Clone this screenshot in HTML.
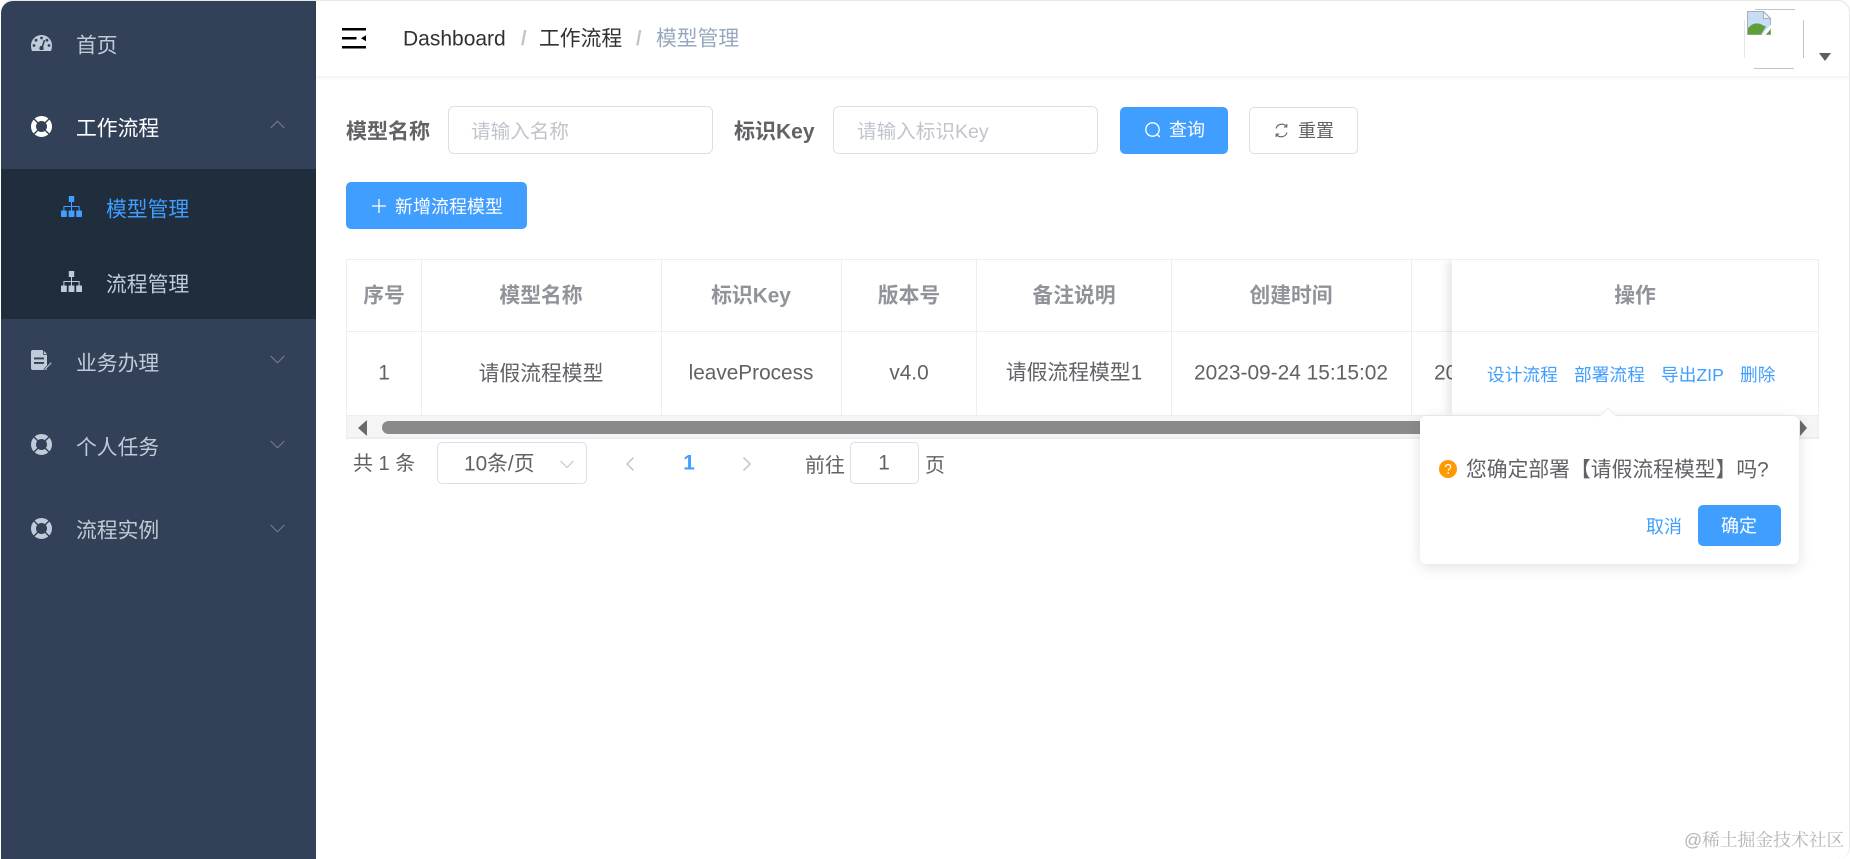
<!DOCTYPE html>
<html lang="zh-CN">
<head>
<meta charset="utf-8">
<title>模型管理</title>
<style>
html,body{margin:0;padding:0;width:1850px;height:859px;overflow:hidden;background:#fff}
body{position:relative;font-family:"Liberation Sans","Noto Sans CJK SC",sans-serif;font-size:20.8px;color:#606266}
div,span,svg{position:absolute;box-sizing:border-box}
.t{white-space:nowrap;line-height:1;transform:translateY(-50%)}
.c{white-space:nowrap;line-height:1;transform:translate(-50%,-50%);text-align:center}
.menu{color:#bfcbd9}
.sep{position:absolute;background:#ebeef5}
.th{font-weight:700;color:#909399}
.link{color:#409eff;font-size:17.7px}
</style>
</head>
<body>

<!-- window frame -->
<div style="left:0;top:0;width:1850px;height:859px;border-top:1px solid #e8e8e8;border-right:1px solid #e8e8e8;border-radius:12px 12px 12px 0;z-index:30;pointer-events:none"></div>

<!-- sidebar -->
<div style="left:1px;top:1px;width:315px;height:858px;background:#324157;border-top-left-radius:12px;overflow:hidden">
  <div style="left:0;top:168px;width:315px;height:150px;background:#1f2d3d"></div>
</div>

<!-- sidebar icons -->
<svg style="left:31px;top:35px" width="21" height="16" viewBox="0 0 21 16">
  <path d="M10.5 0C4.7 0 0 4.7 0 10.500c0 1.900.3 3.600 1 5.500h19c.7-1.900 1-3.600 1-5.500C21 4.700 16.300 0 10.500 0z" fill="#bfcbd9"/>
  <g fill="#324157"><circle cx="10.500" cy="3" r="1.400"/><circle cx="5" cy="5.200" r="1.400"/><circle cx="16" cy="5.200" r="1.400"/><circle cx="3" cy="10.500" r="1.400"/><circle cx="18" cy="10.500" r="1.400"/><path d="M12.800 4.800l1.400.6-2 6.200c.7 1 .6 2.500-.2 3.400H9c-.9-1-.9-2.600.2-3.600.5-.4 1.100-.6 1.600-.5z"/></g>
</svg>
<svg style="left:31px;top:116px" width="21" height="21" viewBox="0 0 21 21">
  <circle cx="10.500" cy="10.500" r="8" fill="none" stroke="#fff" stroke-width="5"/>
  <g stroke="#324157" stroke-width="1.400"><path d="M2.500 2.500l4.400 4.400M18.500 2.500l-4.400 4.400M2.500 18.500l4.400-4.400M18.500 18.500l-4.400-4.400"/></g>
</svg>
<svg style="left:61px;top:196px" width="21" height="21" viewBox="0 0 21 21" fill="#409eff">
  <rect x="7.800" y="0" width="5.400" height="6"/><rect x="0" y="14.500" width="5.800" height="6.500" rx=".6"/><rect x="7.600" y="14.500" width="5.800" height="6.500" rx=".6"/><rect x="15.200" y="14.500" width="5.800" height="6.500" rx=".6"/>
  <path d="M10 6h1v4h7.600v4.500h-1V11H11v3.500h-1V11H3.400v3.500h-1V10H10z"/>
</svg>
<svg style="left:61px;top:271px" width="21" height="21" viewBox="0 0 21 21" fill="#bfcbd9">
  <rect x="7.800" y="0" width="5.400" height="6"/><rect x="0" y="14.500" width="5.800" height="6.500" rx=".6"/><rect x="7.600" y="14.500" width="5.800" height="6.500" rx=".6"/><rect x="15.200" y="14.500" width="5.800" height="6.500" rx=".6"/>
  <path d="M10 6h1v4h7.600v4.500h-1V11H11v3.500h-1V11H3.400v3.500h-1V10H10z"/>
</svg>
<svg style="left:31px;top:350px" width="21" height="20" viewBox="0 0 21 20">
  <path d="M2 0h9.500L16 4.500V20H2a2 2 0 0 1-2-2V2a2 2 0 0 1 2-2z" fill="#bfcbd9"/>
  <path d="M12.500 0L17 4.500h-4.500z" fill="#bfcbd9" stroke="#324157" stroke-width=".8"/>
  <rect x="3" y="7.500" width="10" height="1.900" fill="#324157"/><rect x="3" y="12" width="10" height="1.900" fill="#324157"/>
  <path d="M13 19l6.800-7 1.200 1.200-6.800 7H13z" fill="#bfcbd9" stroke="#324157" stroke-width=".6"/>
</svg>
<svg style="left:31px;top:434px" width="21" height="21" viewBox="0 0 21 21">
  <circle cx="10.500" cy="10.500" r="8" fill="none" stroke="#bfcbd9" stroke-width="5"/>
  <g stroke="#324157" stroke-width="1.400"><path d="M2.500 2.500l4.400 4.400M18.500 2.500l-4.400 4.400M2.500 18.500l4.400-4.400M18.500 18.500l-4.400-4.400"/></g>
</svg>
<svg style="left:31px;top:518px" width="21" height="21" viewBox="0 0 21 21">
  <circle cx="10.500" cy="10.500" r="8" fill="none" stroke="#bfcbd9" stroke-width="5"/>
  <g stroke="#324157" stroke-width="1.400"><path d="M2.500 2.500l4.400 4.400M18.500 2.500l-4.400 4.400M2.500 18.500l4.400-4.400M18.500 18.500l-4.400-4.400"/></g>
</svg>

<!-- sidebar text -->
<span class="t menu" style="left:76px;top:47px">首页</span>
<span class="t" style="left:76px;top:130px;color:#fff">工作流程</span>
<span class="t" style="left:106px;top:211px;color:#409eff">模型管理</span>
<span class="t menu" style="left:106px;top:286px">流程管理</span>
<span class="t menu" style="left:76px;top:365px">业务办理</span>
<span class="t menu" style="left:76px;top:449px">个人任务</span>
<span class="t menu" style="left:76px;top:532px">流程实例</span>

<!-- chevrons -->
<svg style="left:270px;top:120px" width="15" height="9" viewBox="0 0 15 9"><path d="M.7 8L7.500 1.200 14.300 8" fill="none" stroke="#76828f" stroke-width="1"/></svg>
<svg style="left:270px;top:355px" width="15" height="9" viewBox="0 0 15 9"><path d="M.7 1l6.800 6.800L14.300 1" fill="none" stroke="#76828f" stroke-width="1"/></svg>
<svg style="left:270px;top:440px" width="15" height="9" viewBox="0 0 15 9"><path d="M.7 1l6.800 6.800L14.300 1" fill="none" stroke="#76828f" stroke-width="1"/></svg>
<svg style="left:270px;top:524px" width="15" height="9" viewBox="0 0 15 9"><path d="M.7 1l6.800 6.800L14.300 1" fill="none" stroke="#76828f" stroke-width="1"/></svg>

<!-- header -->
<div style="left:316px;top:1px;width:1533px;height:75px;background:#fff;box-shadow:0 1px 4px rgba(0,21,41,.08);border-top-right-radius:12px"></div>
<svg style="left:342px;top:28px" width="24" height="21" viewBox="0 0 24 21" fill="#000">
  <rect x="0" y="0" width="24" height="2.500"/><rect x="0" y="9" width="14.500" height="2.500"/><rect x="0" y="18" width="24" height="2.500"/><path d="M24 7.200v6l-5-3z"/>
</svg>
<span class="t" style="left:403px;top:39px;color:#303133;font-size:21px">Dashboard</span>
<span class="t" style="left:521px;top:39px;color:#c0c4cc;font-weight:700;font-size:20px">/</span>
<span class="t" style="left:539px;top:40px;color:#303133">工作流程</span>
<span class="t" style="left:636px;top:39px;color:#c0c4cc;font-weight:700;font-size:20px">/</span>
<span class="t" style="left:656px;top:40px;color:#97a8be">模型管理</span>

<!-- avatar -->
<div style="left:1744px;top:20px;width:1px;height:38px;background:#e6e6e6"></div>
<div style="left:1755px;top:9px;width:40px;height:1px;background:#c4c4c4"></div>
<div style="left:1803px;top:20px;width:1px;height:38px;background:#c4c4c4"></div>
<div style="left:1754px;top:68px;width:40px;height:1px;background:#c4c4c4"></div>
<svg style="left:1747px;top:11px" width="24" height="24" viewBox="0 0 24 24">
  <path d="M.5.5h16l7 7v16H.5z" fill="#c6ddf5" stroke="#a9adb5" stroke-width="1"/>
  <path d="M16.500.5l7 7h-7z" fill="#f2f3f5" stroke="#a9adb5" stroke-width="1"/>
  <path d="M1 23.500v-6c3-5 10-7 15-3l3 1-5 8z" fill="#5f9e38"/>
  <path d="M19 23.500l4.500-5v5z" fill="#5f9e38"/>
  <path d="M14.500 24L24 13.500v4L18.500 24z" fill="#fff"/>
</svg>
<svg style="left:1819px;top:53px" width="12" height="8" viewBox="0 0 12 8"><path d="M0 0h12L6 8z" fill="#5a5e66"/></svg>

<!-- search form -->
<span class="t" style="left:346px;top:132px;font-weight:700;font-size:21px">模型名称</span>
<div style="left:448px;top:106px;width:265px;height:48px;border:1px solid #dcdfe6;border-radius:6px;background:#fff"></div>
<span class="t" style="left:471px;top:133px;color:#c0c4cc;font-size:19.600px">请输入名称</span>
<span class="t" style="left:734px;top:132px;font-weight:700;font-size:21px">标识Key</span>
<div style="left:833px;top:106px;width:265px;height:48px;border:1px solid #dcdfe6;border-radius:6px;background:#fff"></div>
<span class="t" style="left:857px;top:133px;color:#c0c4cc;font-size:19.600px">请输入标识Key</span>

<div style="left:1120px;top:107px;width:108px;height:47px;background:#409eff;border-radius:5px"></div>
<svg style="left:1144px;top:121px" width="18" height="18" viewBox="0 0 18 18" fill="none" stroke="#fff" stroke-width="1.300"><circle cx="8.500" cy="8.500" r="6.700"/><path d="M13 13.200l2.800 2.800"/></svg>
<span class="t" style="left:1169px;top:130px;color:#fff;font-size:18px">查询</span>
<div style="left:1249px;top:107px;width:109px;height:47px;background:#fff;border:1px solid #dcdfe6;border-radius:5px"></div>
<svg style="left:1274px;top:123px" width="15" height="15" viewBox="0 0 15 15" fill="none" stroke="#606266" stroke-width="1.100"><path d="M2 5.500A6 6 0 0 1 12.500 3.500"/><path d="M13 9.500A6 6 0 0 1 2.500 11.500"/><path d="M12.800 1v3h-3M2.200 14v-3h3"/></svg>
<span class="t" style="left:1298px;top:131px;font-size:18px">重置</span>

<div style="left:346px;top:182px;width:181px;height:47px;background:#409eff;border-radius:5px"></div>
<svg style="left:372px;top:199px" width="14" height="14" viewBox="0 0 14 14"><path d="M7 0v14M0 7h14" stroke="#fff" stroke-width="1.300"/></svg>
<span class="t" style="left:395px;top:207px;color:#fff;font-size:18px">新增流程模型</span>

<!-- table -->
<div style="left:346px;top:259px;width:1473px;height:180px;border:1px solid #ebeef5;border-bottom:none;background:#fff"></div>
<div class="sep" style="left:347px;top:331px;width:1471px;height:1px"></div>
<div class="sep" style="left:347px;top:415px;width:1471px;height:1px"></div>
<div class="sep" style="left:421px;top:260px;width:1px;height:155px"></div>
<div class="sep" style="left:661px;top:260px;width:1px;height:155px"></div>
<div class="sep" style="left:841px;top:260px;width:1px;height:155px"></div>
<div class="sep" style="left:976px;top:260px;width:1px;height:155px"></div>
<div class="sep" style="left:1171px;top:260px;width:1px;height:155px"></div>
<div class="sep" style="left:1411px;top:260px;width:1px;height:155px"></div>

<span class="c th" style="left:384px;top:297px">序号</span>
<span class="c th" style="left:541px;top:297px">模型名称</span>
<span class="c th" style="left:751px;top:297px">标识Key</span>
<span class="c th" style="left:909px;top:297px">版本号</span>
<span class="c th" style="left:1074px;top:297px">备注说明</span>
<span class="c th" style="left:1291px;top:297px">创建时间</span>

<span class="c" style="left:384px;top:374px">1</span>
<span class="c" style="left:541px;top:375px">请假流程模型</span>
<span class="c" style="left:751px;top:374px">leaveProcess</span>
<span class="c" style="left:909px;top:374px">v4.0</span>
<span class="c" style="left:1074px;top:374px">请假流程模型1</span>
<span class="c" style="left:1291px;top:374px;font-size:20.900px">2023-09-24 15:15:02</span>
<span class="t" style="left:1434px;top:374px;font-size:20.900px">2023</span>

<!-- scrollbar -->
<div style="left:347px;top:416px;width:1471px;height:22px;background:#f5f5f5"></div>
<div style="left:346px;top:437px;width:1473px;height:2px;background:#ebeef5"></div>
<svg style="left:358px;top:420px" width="10" height="16" viewBox="0 0 10 16"><path d="M9 0v16L0 8z" fill="#6a6a6a"/></svg>
<div style="left:382px;top:421px;width:1040px;height:13px;background:#8a8a8a;border-radius:7px 0 0 7px"></div>
<svg style="left:1800px;top:420px" width="8" height="16" viewBox="0 0 8 16"><path d="M0 0v16l7-8z" fill="#6a6a6a"/></svg>

<!-- fixed column -->
<div style="left:1452px;top:260px;width:366px;height:155px;background:#fff;box-shadow:-5px 0 8px rgba(0,0,0,.09);clip-path:inset(0 0 0 -16px)"></div>
<div class="sep" style="left:1452px;top:331px;width:366px;height:1px"></div>
<div class="sep" style="left:1452px;top:415px;width:366px;height:1px"></div>
<span class="c th" style="left:1635px;top:297px">操作</span>
<span class="t link" style="left:1487px;top:376px">设计流程</span>
<span class="t link" style="left:1574px;top:376px">部署流程</span>
<span class="t link" style="left:1661px;top:376px">导出ZIP</span>
<span class="t link" style="left:1740px;top:376px">删除</span>

<!-- pagination -->
<span class="t" style="left:353px;top:464px;font-size:20px">共 1 条</span>
<div style="left:437px;top:442px;width:150px;height:42px;border:1px solid #dcdfe6;border-radius:5px"></div>
<span class="t" style="left:464px;top:465px;font-size:20.800px">10条/页</span>
<svg style="left:560px;top:460px" width="14" height="9" viewBox="0 0 14 9"><path d="M.7 1L7 7.500 13.300 1" fill="none" stroke="#c0c4cc" stroke-width="1.100"/></svg>
<svg style="left:625px;top:456px" width="10" height="16" viewBox="0 0 10 16"><path d="M8.500 1.500L2 8l6.500 6.500" fill="none" stroke="#c0c4cc" stroke-width="1.500"/></svg>
<span class="c" style="left:689px;top:464px;color:#409eff;font-weight:700;font-size:20.800px">1</span>
<svg style="left:742px;top:456px" width="10" height="16" viewBox="0 0 10 16"><path d="M1.500 1.500L8 8l-6.500 6.500" fill="none" stroke="#c0c4cc" stroke-width="1.500"/></svg>
<span class="t" style="left:805px;top:466px;font-size:20px">前往</span>
<div style="left:850px;top:442px;width:69px;height:42px;border:1px solid #dcdfe6;border-radius:5px"></div>
<span class="c" style="left:884px;top:464px;font-size:20.800px">1</span>
<span class="t" style="left:925px;top:466px;font-size:20px">页</span>

<!-- popover -->
<div style="left:1420px;top:416px;width:379px;height:148px;background:#fff;border-radius:6px;box-shadow:0 3px 14px rgba(0,0,0,.12);z-index:5"></div>
<svg style="left:1599px;top:407px;z-index:6" width="18" height="10" viewBox="0 0 18 10"><path d="M0 10L9 1l9 9z" fill="#fff"/><path d="M0 10L9 1l9 9" fill="none" stroke="#ebeef5" stroke-width="1"/></svg>
<svg style="left:1439px;top:460px;z-index:6" width="18" height="18" viewBox="0 0 18 18"><circle cx="9" cy="9" r="9" fill="#ff9900"/><path d="M6.500 7c0-1.500 1.100-2.500 2.600-2.500S11.700 5.400 11.700 7c0 1.700-2.500 2-2.500 3.700" fill="none" stroke="#fff" stroke-width="1.300"/><circle cx="9.200" cy="13" r=".9" fill="#fff"/></svg>
<span class="t" style="left:1466px;top:471px;z-index:6">您确定部署【请假流程模型】吗?</span>
<span class="t" style="left:1646px;top:527px;color:#409eff;font-size:18px;z-index:6">取消</span>
<div style="left:1698px;top:505px;width:83px;height:41px;background:#409eff;border-radius:5px;z-index:6"></div>
<span class="c" style="left:1739px;top:526px;color:#fff;font-size:18px;z-index:7">确定</span>

<!-- watermark -->
<span class="t" style="left:1684px;top:841px;color:#b4b4b4;font-size:17.800px;z-index:8;font-family:'Liberation Sans','Noto Serif CJK SC',serif">@稀土掘金技术社区</span>

</body>
</html>
